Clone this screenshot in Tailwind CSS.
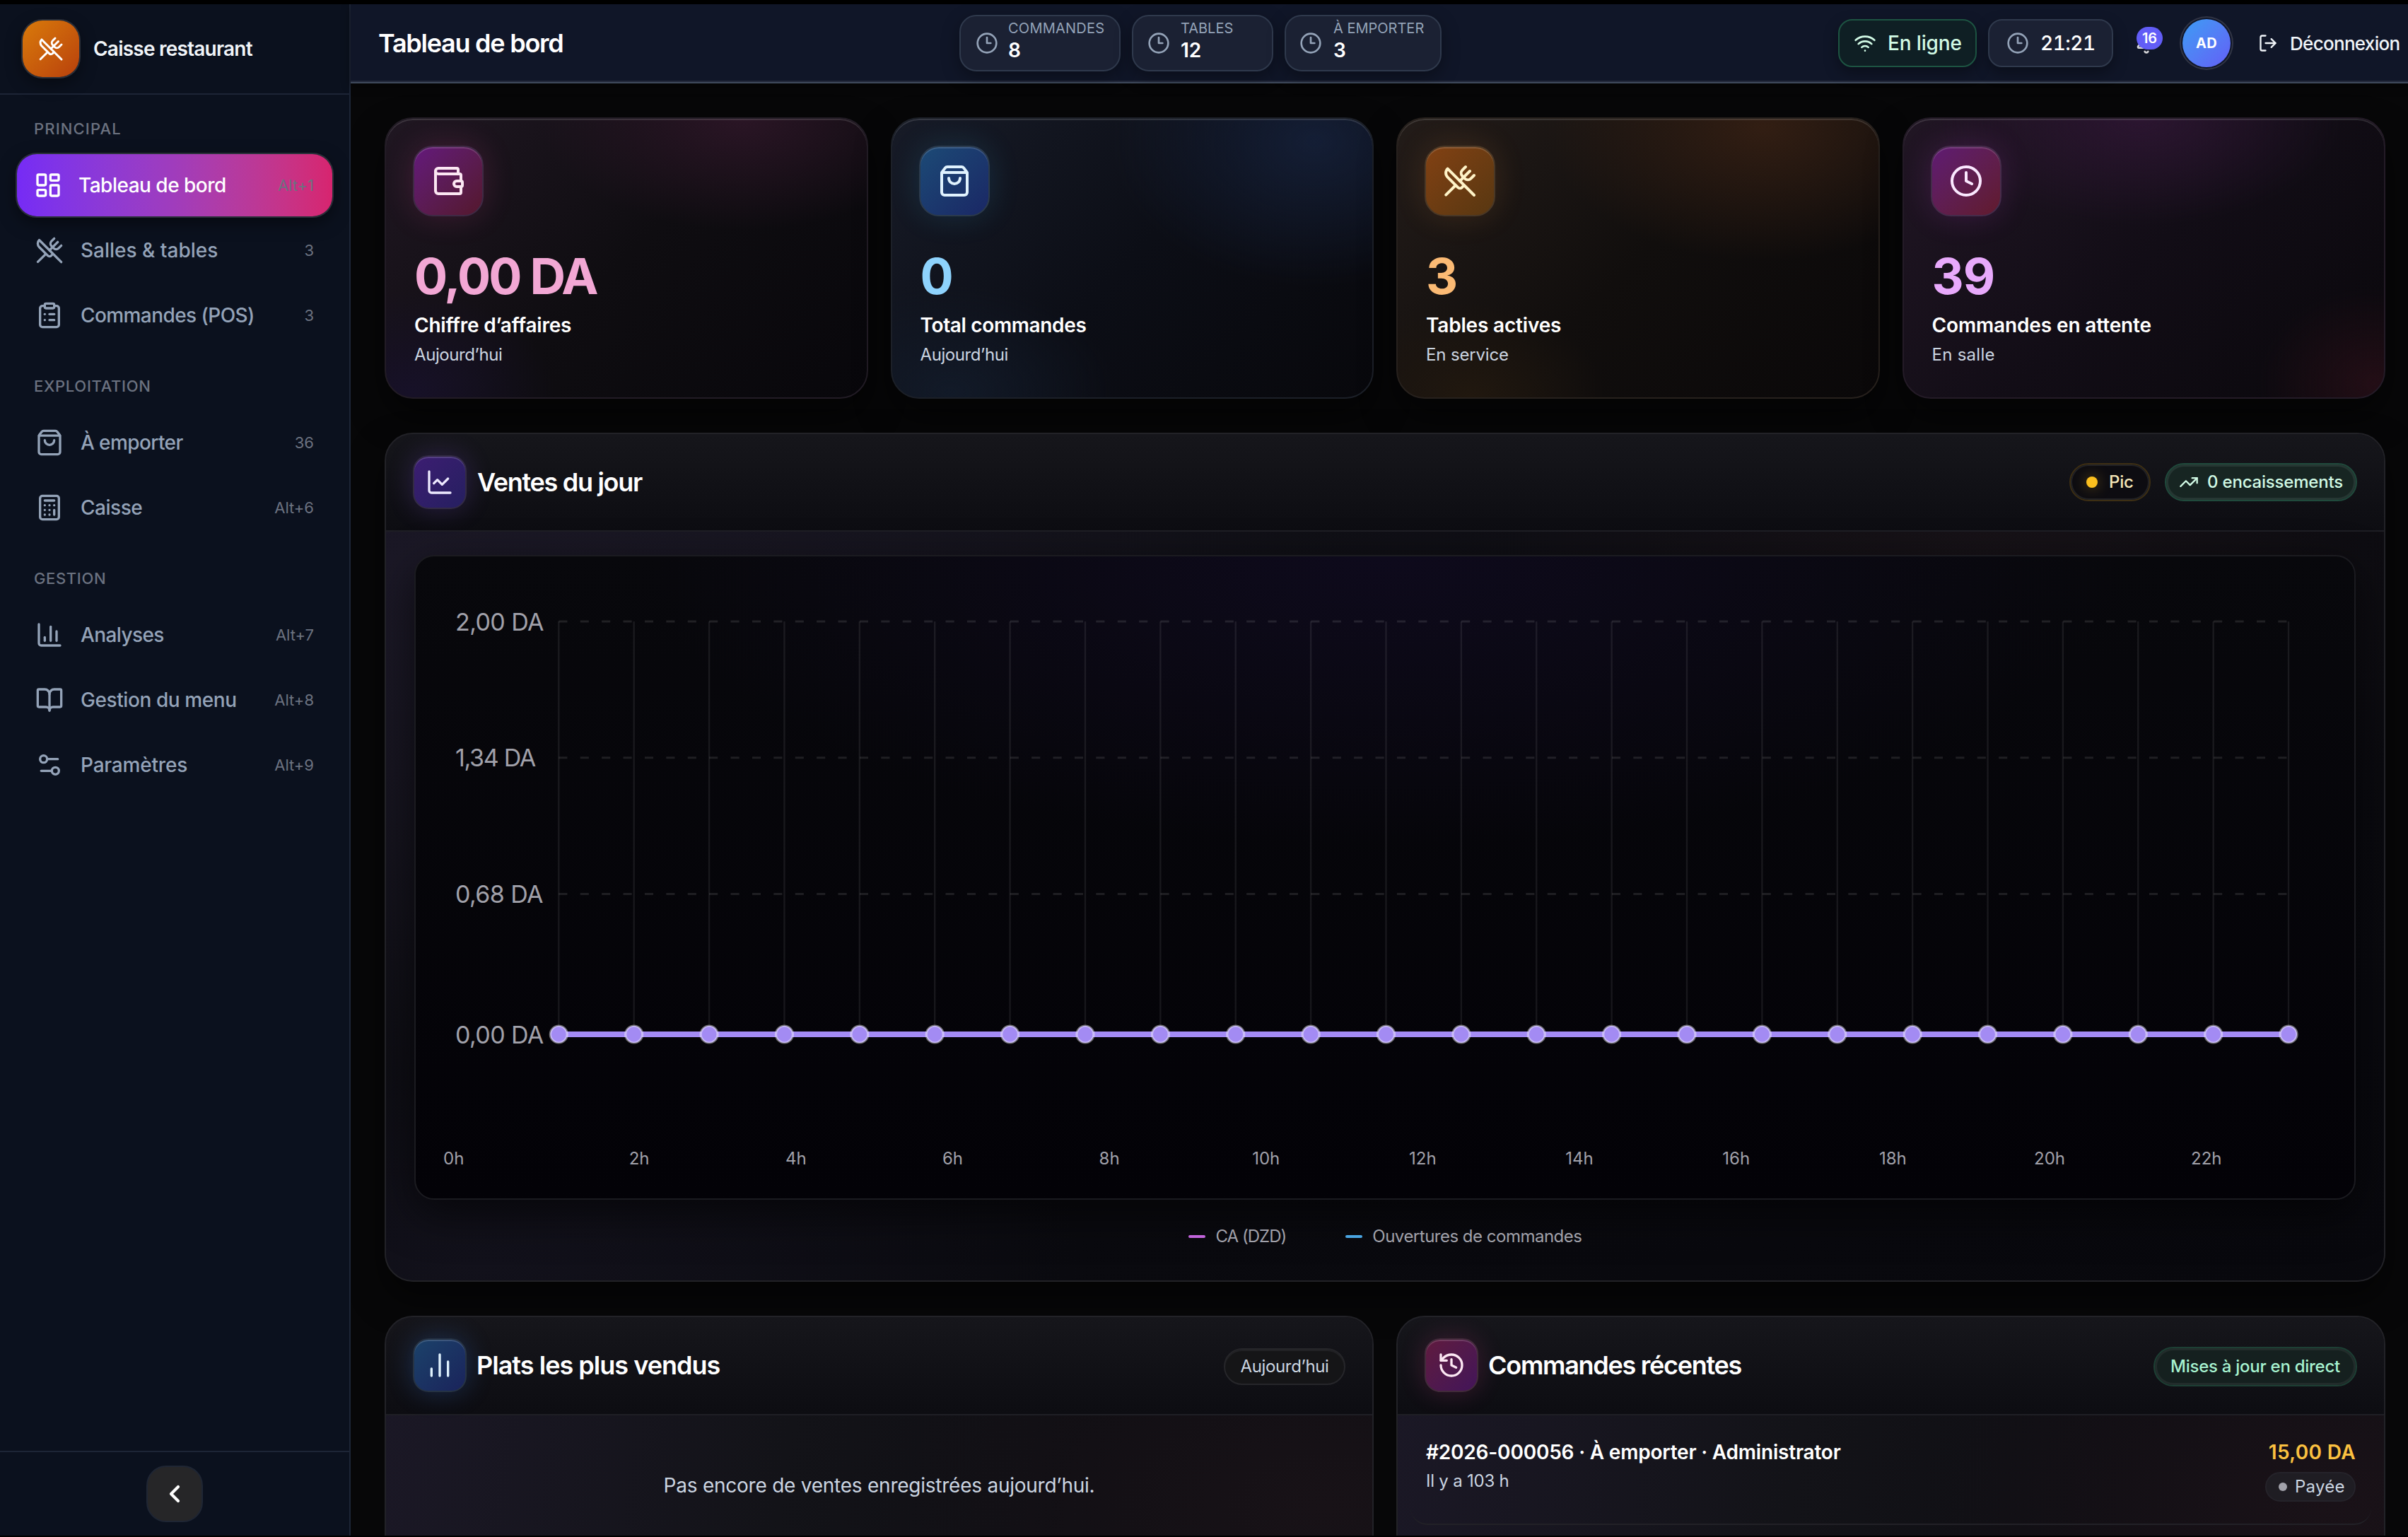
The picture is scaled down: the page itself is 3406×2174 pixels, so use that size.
<!DOCTYPE html>
<html lang="fr">
<head>
<meta charset="utf-8">
<title>Caisse restaurant</title>
<script src="https://cdn.jsdelivr.net/npm/@tailwindcss/browser@4"></script>
</head>
<body class="bg-black font-[Inter,sans-serif] text-white">

<svg class="hidden">
  <symbol id="i-utensils" viewBox="0 0 24 24"><path d="m16 2-2.3 2.3a3 3 0 0 0 0 4.2l1.8 1.8a3 3 0 0 0 4.2 0L22 8"/><path d="M15 15 3.3 3.3a4.2 4.2 0 0 0 0 6l7.3 7.3c.7.7 2 .7 2.8 0L15 15Zm0 0 7 7"/><path d="m2.1 21.8 6.4-6.3"/><path d="m19 5-7 7"/></symbol>
  <symbol id="i-dashboard" viewBox="0 0 24 24"><rect width="7" height="9" x="3" y="3" rx="1"/><rect width="7" height="5" x="14" y="3" rx="1"/><rect width="7" height="9" x="14" y="12" rx="1"/><rect width="7" height="5" x="3" y="16" rx="1"/></symbol>
  <symbol id="i-clipboard" viewBox="0 0 24 24"><rect width="8" height="4" x="8" y="2" rx="1"/><path d="M16 4h2a2 2 0 0 1 2 2v14a2 2 0 0 1-2 2H6a2 2 0 0 1-2-2V6a2 2 0 0 1 2-2h2"/><path d="M12 11h4"/><path d="M12 16h4"/><path d="M8 11h.01"/><path d="M8 16h.01"/></symbol>
  <symbol id="i-bag" viewBox="0 0 24 24"><path d="M16 10a4 4 0 0 1-8 0"/><path d="M3.103 6.034h17.794"/><path d="M3.4 5.467a2 2 0 0 0-.4 1.2V20a2 2 0 0 0 2 2h14a2 2 0 0 0 2-2V6.667a2 2 0 0 0-.4-1.2l-2-2.667A2 2 0 0 0 17 2H7a2 2 0 0 0-1.6.8z"/></symbol>
  <symbol id="i-calculator" viewBox="0 0 24 24"><rect width="16" height="20" x="4" y="2" rx="2"/><path d="M8 6h8M16 14v4M16 10h.01M12 10h.01M8 10h.01M12 14h.01M8 14h.01M12 18h.01M8 18h.01"/></symbol>
  <symbol id="i-column" viewBox="0 0 24 24"><path d="M3 3v16a2 2 0 0 0 2 2h16"/><path d="M18 17V9"/><path d="M13 17V5"/><path d="M8 17v-3"/></symbol>
  <symbol id="i-book" viewBox="0 0 24 24"><path d="M12 7v14"/><path d="M3 18a1 1 0 0 1-1-1V4a1 1 0 0 1 1-1h5a4 4 0 0 1 4 4 4 4 0 0 1 4-4h5a1 1 0 0 1 1 1v13a1 1 0 0 1-1 1h-6a3 3 0 0 0-3 3 3 3 0 0 0-3-3z"/></symbol>
  <symbol id="i-settings" viewBox="0 0 24 24"><path d="M14 17H5"/><path d="M19 7h-9"/><circle cx="17" cy="17" r="3"/><circle cx="7" cy="7" r="3"/></symbol>
  <symbol id="i-line" viewBox="0 0 24 24"><path d="M3 3v16a2 2 0 0 0 2 2h16"/><path d="m19 9-5 5-4-4-3 3"/></symbol>
  <symbol id="i-wallet" viewBox="0 0 24 24"><path d="M19 7V4a1 1 0 0 0-1-1H5a2 2 0 0 0 0 4h15a1 1 0 0 1 1 1v4h-3a2 2 0 0 0 0 4h3a1 1 0 0 0 1-1v-2a1 1 0 0 0-1-1"/><path d="M3 5v14a2 2 0 0 0 2 2h15a1 1 0 0 0 1-1v-4"/></symbol>
  <symbol id="i-clock" viewBox="0 0 24 24"><circle cx="12" cy="12" r="10"/><path d="M12 6v6l4 2"/></symbol>
  <symbol id="i-clock3" viewBox="0 0 24 24"><circle cx="12" cy="12" r="10"/><path d="M12 6v6h4"/></symbol>
  <symbol id="i-wifi" viewBox="0 0 24 24"><path d="M12 20h.01"/><path d="M2 8.82a15 15 0 0 1 20 0"/><path d="M5 12.859a10 10 0 0 1 14 0"/><path d="M8.5 16.429a5 5 0 0 1 7 0"/></symbol>
  <symbol id="i-bell" viewBox="0 0 24 24"><path d="M10.268 21a2 2 0 0 0 3.464 0"/><path d="M3.262 15.326A1 1 0 0 0 4 17h16a1 1 0 0 0 .74-1.673C19.41 13.956 18 12.499 18 8A6 6 0 0 0 6 8c0 4.499-1.411 5.956-2.738 7.326"/></symbol>
  <symbol id="i-logout" viewBox="0 0 24 24"><path d="m16 17 5-5-5-5"/><path d="M21 12H9"/><path d="M9 21H5a2 2 0 0 1-2-2V5a2 2 0 0 1 2-2h4"/></symbol>
  <symbol id="i-trend" viewBox="0 0 24 24"><path d="M16 7h6v6"/><path d="m22 7-8.5 8.5-5-5L2 17"/></symbol>
  <symbol id="i-history" viewBox="0 0 24 24"><path d="M3 12a9 9 0 1 0 9-9 9.75 9.75 0 0 0-6.74 2.74L3 8"/><path d="M3 3v5h5"/><path d="M12 7v5l4 2"/></symbol>
  <symbol id="i-bars" viewBox="0 0 24 24"><path d="M5 21v-6"/><path d="M12 21V3"/><path d="M19 21V9"/></symbol>
  <symbol id="i-left" viewBox="0 0 24 24"><path d="m15 18-6-6 6-6"/></symbol>
</svg>

<div class="flex h-[2174px] w-[3406px] overflow-hidden pt-[6px] pb-[2px] whitespace-nowrap [&_svg]:fill-none [&_svg]:stroke-current [&_svg]:stroke-2 [&_svg]:shrink-0 [&_svg]:[stroke-linecap:round] [&_svg]:[stroke-linejoin:round]">

  <!-- Sidebar -->
  <aside class="flex w-[496px] shrink-0 flex-col border-r-2 border-[#1d2536] bg-[#0b111e]">
    <div class="flex h-[128px] items-center gap-[20px] border-b-2 border-[#1d2536] pl-[32px]">
      <div class="flex size-[80px] items-center justify-center rounded-[28px] bg-linear-135 from-[#d97a0a] to-[#b8400c] shadow-[0_0_0_2px_#2b303a,0_8px_24px_rgba(0,0,0,0.45)]">
        <svg class="size-[36px]"><use href="#i-utensils"/></svg>
      </div>
      <span class="text-[28px] font-semibold tracking-[-0.78px] text-[#f1f5f9]">Caisse restaurant</span>
    </div>

    <nav class="flex flex-1 flex-col gap-[40px] px-[24px] pt-[32px] text-[28px] font-medium text-[#94a3b8]">
      <div class="flex flex-col gap-[4px]">
        <h2 class="mb-[16px] h-[32px] pl-[24px] text-[22px] leading-[32px] tracking-[1.14px] text-[#6b7280]">PRINCIPAL</h2>
        <a class="flex h-[88px] items-center gap-[23px] rounded-[28px] bg-linear-to-r from-[#762bf5] via-[#a03cbc] to-[#d7246f] pr-[26px] pl-[24px] text-white shadow-[0_0_0_2px_#2b303a,0_8px_24px_rgba(0,0,0,0.5)]">
          <svg class="size-[40px]"><use href="#i-dashboard"/></svg><span class="tracking-[-0.51px]">Tableau de bord</span><span class="ml-auto text-[22px] font-normal text-[#6b7280]">Alt+1</span>
        </a>
        <a class="flex h-[88px] items-center gap-[24px] pr-[26px] pl-[26px]"><svg class="size-[40px]"><use href="#i-utensils"/></svg><span>Salles &amp; tables</span><span class="ml-auto text-[22px] font-normal text-[#6b7280]">3</span></a>
        <a class="flex h-[88px] items-center gap-[24px] pr-[26px] pl-[26px]"><svg class="size-[40px]"><use href="#i-clipboard"/></svg><span class="tracking-[-0.58px]">Commandes (POS)</span><span class="ml-auto text-[22px] font-normal text-[#6b7280]">3</span></a>
      </div>
      <div class="flex flex-col gap-[4px]">
        <h2 class="mb-[16px] h-[32px] pl-[24px] text-[22px] leading-[32px] tracking-[0.68px] text-[#6b7280]">EXPLOITATION</h2>
        <a class="flex h-[88px] items-center gap-[24px] pr-[26px] pl-[26px]"><svg class="size-[40px]"><use href="#i-bag"/></svg><span class="tracking-[-0.6px]">À emporter</span><span class="ml-auto text-[22px] font-normal text-[#6b7280]">36</span></a>
        <a class="flex h-[88px] items-center gap-[24px] pr-[26px] pl-[26px]"><svg class="size-[40px]"><use href="#i-calculator"/></svg><span class="tracking-[-0.47px]">Caisse</span><span class="ml-auto text-[22px] font-normal text-[#6b7280]">Alt+6</span></a>
      </div>
      <div class="flex flex-col gap-[4px]">
        <h2 class="mb-[16px] h-[32px] pl-[24px] text-[22px] leading-[32px] tracking-[0.64px] text-[#6b7280]">GESTION</h2>
        <a class="flex h-[88px] items-center gap-[24px] pr-[26px] pl-[26px]"><svg class="size-[40px]"><use href="#i-column"/></svg><span class="tracking-[-0.6px]">Analyses</span><span class="ml-auto text-[22px] font-normal text-[#6b7280]">Alt+7</span></a>
        <a class="flex h-[88px] items-center gap-[24px] pr-[26px] pl-[26px]"><svg class="size-[40px]"><use href="#i-book"/></svg><span class="tracking-[-0.42px]">Gestion du menu</span><span class="ml-auto text-[22px] font-normal text-[#6b7280]">Alt+8</span></a>
        <a class="flex h-[88px] items-center gap-[24px] pr-[26px] pl-[26px]"><svg class="size-[40px]"><use href="#i-settings"/></svg><span class="tracking-[-0.2px]">Paramètres</span><span class="ml-auto text-[22px] font-normal text-[#6b7280]">Alt+9</span></a>
      </div>
    </nav>

    <div class="flex h-[120px] items-center justify-center border-t-2 border-[#1d2536]">
      <button class="flex size-[80px] items-center justify-center rounded-[28px] border-2 border-[#1f2634] bg-[#262628] text-white"><svg class="size-[40px] stroke-[2.5]!"><use href="#i-left"/></svg></button>
    </div>
  </aside>

  <div class="flex min-w-0 flex-1 flex-col">
    <!-- Top bar -->
    <header class="relative z-10 flex h-[112px] shrink-0 items-center border-b-2 border-[#3f4a5c] bg-[#101628] pl-[39px] shadow-[inset_0_-2px_0_#22283a,0_4px_12px_rgba(0,0,0,0.4)]">
      <h1 class="w-[822px] text-[36px] leading-[44px] font-semibold tracking-[-1.25px]">Tableau de bord</h1>
      <div class="flex gap-[16px]">
        <div class="flex h-[80px] w-[228px] items-center gap-[13px] rounded-[24px] border-2 border-[#2f394c] bg-[#1b2133] pl-[21px] shadow-[0_8px_24px_rgba(0,0,0,0.35)]">
          <svg class="size-[32px] text-[#94a3b8]"><use href="#i-clock3"/></svg>
          <div class="self-start pt-[5px] pl-px"><div class="text-[20px] leading-[24px] tracking-[0.24px] text-[#94a3b8]">COMMANDES</div><div class="mt-px text-[28px] leading-[36px] font-semibold">8</div></div>
        </div>
        <div class="flex h-[80px] w-[200px] items-center gap-[15px] rounded-[24px] border-2 border-[#2f394c] bg-[#1b2133] pl-[20px] shadow-[0_8px_24px_rgba(0,0,0,0.35)]">
          <svg class="size-[32px] text-[#94a3b8]"><use href="#i-clock3"/></svg>
          <div class="self-start pt-[5px]"><div class="text-[20px] leading-[24px] text-[#94a3b8]">TABLES</div><div class="mt-px text-[28px] leading-[36px] font-semibold">12</div></div>
        </div>
        <div class="flex h-[80px] w-[222px] items-center gap-[16px] rounded-[24px] border-2 border-[#2f394c] bg-[#1b2133] pl-[19px] shadow-[0_8px_24px_rgba(0,0,0,0.35)]">
          <svg class="size-[32px] text-[#94a3b8]"><use href="#i-clock3"/></svg>
          <div class="self-start pt-[5px]"><div class="text-[20px] leading-[24px] text-[#94a3b8]">À EMPORTER</div><div class="mt-px text-[28px] leading-[36px] font-semibold">3</div></div>
        </div>
      </div>
      <div class="ml-[561px] flex items-center">
        <div class="flex h-[68px] w-[196px] items-center gap-[16px] rounded-[20px] border-2 border-[#1d5442] bg-[#0f1f24] pl-[20px] text-[28px] font-medium tracking-[-0.14px] text-[#d1fae5] shadow-[0_8px_20px_rgba(0,0,0,0.35)]"><svg class="size-[32px]"><use href="#i-wifi"/></svg>En ligne</div>
        <div class="ml-[16px] flex h-[68px] w-[177px] items-center gap-[16px] rounded-[20px] border-2 border-[#2f394c] bg-[#1b2133] pl-[24px] text-[28px] font-medium tracking-[-0.5px] tabular-nums shadow-[0_8px_20px_rgba(0,0,0,0.35)]"><svg class="size-[32px] text-[#94a3b8]"><use href="#i-clock3"/></svg>21:21</div>
        <div class="relative ml-[31px] size-[32px] text-[#d4d4d8]">
          <svg class="size-[32px]"><use href="#i-bell"/></svg>
          <span class="absolute top-[-7px] left-[2px] flex h-[32px] w-[37px] items-center justify-center rounded-full bg-[#625df7] text-[20px] leading-none font-semibold text-white">16</span>
        </div>
        <div class="ml-[35px] flex size-[68px] items-center justify-center rounded-full bg-linear-135 from-[#389cf4] to-[#615df6] text-[20px] font-bold tracking-[0.4px] shadow-[0_0_0_2px_#101628,0_0_0_4px_#313545]">AD</div>
        <div class="ml-[39px] flex items-center gap-[17px] text-[26px] font-medium tracking-[-0.7px] text-[#f1f5f9]"><svg class="size-[28px]"><use href="#i-logout"/></svg>Déconnexion</div>
      </div>
    </header>

    <!-- Dashboard -->
    <main class="flex flex-1 flex-col gap-[48px] overflow-hidden bg-[#070708] pt-[48px] pr-[32px] pl-[48px]">

      <section class="grid shrink-0 grid-cols-4 gap-[32px]">
        <div class="h-[398px] rounded-[40px] border-2 border-[#221c25] bg-[radial-gradient(ellipse_42%_40%_at_74%_0%,#2a1525,transparent),radial-gradient(ellipse_30%_36%_at_5%_98%,#171128,transparent),linear-gradient(135deg,#201722,#0f0d11_50%,#08070b)] p-[38px] shadow-[0_24px_48px_rgba(0,0,0,0.5),inset_0_2px_0_rgba(255,255,255,0.13)]">
          <div class="flex size-[100px] items-center justify-center rounded-[28px] border-2 border-[#3f2a45] bg-linear-135 from-[#64187c] to-[#54172c] text-[#fce7f3] shadow-[0_0_44px_rgba(236,72,153,0.18),inset_0_2px_0_rgba(255,255,255,0.15)]"><svg class="size-[48px]"><use href="#i-wallet"/></svg></div>
          <div class="mt-[49px] pl-[2px] text-[70px] leading-[72px] font-bold tracking-[-2.8px] text-[#f2a7d4]">0,00 DA</div>
          <div class="mt-[13px] pl-[2px] text-[28px] leading-[40px] font-semibold tracking-[-0.21px]">Chiffre d’affaires</div>
          <div class="mt-[6px] pl-[2px] text-[24px] leading-[32px] tracking-[-0.41px] text-[#cbd5e1]">Aujourd’hui</div>
        </div>
        <div class="h-[398px] rounded-[40px] border-2 border-[#1c2028] bg-[radial-gradient(ellipse_42%_52%_at_88%_8%,#141e35,transparent),radial-gradient(ellipse_34%_38%_at_12%_98%,#121a28,transparent),linear-gradient(135deg,#171b27,#0c0e16_50%,#08080c)] p-[38px] shadow-[0_24px_48px_rgba(0,0,0,0.5),inset_0_2px_0_rgba(255,255,255,0.13)]">
          <div class="flex size-[100px] items-center justify-center rounded-[28px] border-2 border-[#2b3a4c] bg-linear-135 from-[#1c4a76] to-[#1a2765] text-[#e0f2fe] shadow-[0_0_44px_rgba(56,189,248,0.15),inset_0_2px_0_rgba(255,255,255,0.15)]"><svg class="size-[48px]"><use href="#i-bag"/></svg></div>
          <div class="mt-[49px] pl-[2px] text-[70px] leading-[72px] font-bold tracking-[-2.9px] text-[#8ed3fd]">0</div>
          <div class="mt-[13px] pl-[2px] text-[28px] leading-[40px] font-semibold tracking-[-0.35px]">Total commandes</div>
          <div class="mt-[6px] pl-[2px] text-[24px] leading-[32px] tracking-[-0.41px] text-[#cbd5e1]">Aujourd’hui</div>
        </div>
        <div class="h-[398px] rounded-[40px] border-2 border-[#27211d] bg-[radial-gradient(ellipse_45%_48%_at_76%_3%,#321e13,transparent),radial-gradient(ellipse_28%_34%_at_15%_100%,#21180f,transparent),linear-gradient(135deg,#231c19,#110e0d_50%,#0a0809)] p-[38px] shadow-[0_24px_48px_rgba(0,0,0,0.5),inset_0_2px_0_rgba(255,255,255,0.13)]">
          <div class="flex size-[100px] items-center justify-center rounded-[28px] border-2 border-[#4a3826] bg-linear-135 from-[#824113] to-[#583711] text-[#fef3c7] shadow-[0_0_44px_rgba(251,146,60,0.15),inset_0_2px_0_rgba(255,255,255,0.15)]"><svg class="size-[48px]"><use href="#i-utensils"/></svg></div>
          <div class="mt-[49px] pl-[2px] text-[70px] leading-[72px] font-bold tracking-[-2px] text-[#fbba74]">3</div>
          <div class="mt-[13px] pl-[2px] text-[28px] leading-[40px] font-semibold tracking-[-0.18px]">Tables actives</div>
          <div class="mt-[6px] pl-[2px] text-[24px] leading-[32px] tracking-[-0.16px] text-[#cbd5e1]">En service</div>
        </div>
        <div class="h-[398px] rounded-[40px] border-2 border-[#241b27] bg-[radial-gradient(ellipse_42%_38%_at_49%_0%,#2b1530,transparent),radial-gradient(ellipse_24%_34%_at_98%_95%,#230e16,transparent),linear-gradient(135deg,#211624,#120d16_50%,#0a080c)] p-[38px] shadow-[0_24px_48px_rgba(0,0,0,0.5),inset_0_2px_0_rgba(255,255,255,0.13)]">
          <div class="flex size-[100px] items-center justify-center rounded-[28px] border-2 border-[#452c4b] bg-linear-135 from-[#5f1a73] to-[#611a2c] text-[#fae8ff] shadow-[0_0_44px_rgba(217,70,239,0.17),inset_0_2px_0_rgba(255,255,255,0.15)]"><svg class="size-[48px]"><use href="#i-clock"/></svg></div>
          <div class="mt-[49px] pl-[2px] text-[70px] leading-[72px] font-bold tracking-[-1px] text-[#e8a9fb]">39</div>
          <div class="mt-[13px] pl-[2px] text-[28px] leading-[40px] font-semibold tracking-[-0.13px]">Commandes en attente</div>
          <div class="mt-[6px] pl-[2px] text-[24px] leading-[32px] tracking-[0.27px] text-[#cbd5e1]">En salle</div>
        </div>
      </section>

      <section class="h-[1201px] shrink-0 overflow-hidden rounded-[40px] border-2 border-[#222227] bg-[radial-gradient(ellipse_26%_50%_at_80%_8%,#171217,transparent),radial-gradient(ellipse_45%_60%_at_0%_15%,#1b1826,transparent),radial-gradient(ellipse_30%_30%_at_5%_98%,#12111b,transparent),linear-gradient(160deg,#16151d,#0b0b10_50%,#08080d)] shadow-[0_24px_48px_rgba(0,0,0,0.5)]">
        <div class="flex h-[138px] items-center border-b-2 border-[#1f1f25] bg-linear-to-b from-[#16161b] to-[#0d0d12] px-[38px]">
          <div class="flex size-[76px] items-center justify-center rounded-[22px] border-2 border-[#332b45] bg-linear-135 from-[#3c1d72] to-[#251f60] text-[#ede9fe] shadow-[0_0_36px_rgba(139,92,246,0.22),inset_0_2px_0_rgba(255,255,255,0.15)]"><svg class="size-[40px]"><use href="#i-line"/></svg></div>
          <h2 class="ml-[15px] text-[36px] font-semibold tracking-[-1.3px]">Ventes du jour</h2>
          <div class="ml-auto flex items-center gap-[20px] text-[24px] font-medium">
            <span class="flex h-[54px] w-[115px] items-center gap-[16px] rounded-full border-2 border-[#3d2f14] bg-[#0d0c11] pl-[22px] tracking-[-0.22px] text-[#f5e6b8] shadow-[inset_0_0_0_2px_#222226]"><i class="size-[16px] rounded-full bg-[#fbbf1e] shadow-[0_0_20px_rgba(251,191,36,0.4)]"></i>Pic</span>
            <span class="flex h-[54px] w-[272px] items-center gap-[12px] rounded-full border-2 border-[#204a3c] bg-[#172522] pl-[18px] tracking-[-0.2px] text-[#d1fae5] shadow-[inset_0_0_0_3px_#263733]"><svg class="size-[28px]"><use href="#i-trend"/></svg>0 encaissements</span>
          </div>
        </div>
        <div class="px-[40px] pt-[33px]">
          <div class="h-[912px] rounded-[28px] border-2 border-[#1b1b20] bg-[radial-gradient(ellipse_38%_45%_at_50%_0%,#0e0a1c,transparent),linear-gradient(180deg,#08080c,#030207)] shadow-[0_20px_60px_rgba(0,0,0,0.55)]">
            <svg id="chart" class="block" width="2742" height="819" viewBox="0 1 2742 819"></svg>
            <div class="mt-[17px] ml-[39px] grid w-[2660px] grid-cols-24 text-center text-[24px] leading-[32px] text-[#a1a1aa]">
              <span class="text-left">0h</span><span></span><span>2h</span><span></span><span>4h</span><span></span><span>6h</span><span></span><span>8h</span><span></span><span>10h</span><span></span><span>12h</span><span></span><span>14h</span><span></span><span>16h</span><span></span><span>18h</span><span></span><span>20h</span><span></span><span>22h</span><span></span>
            </div>
          </div>
          <div class="mt-[36px] flex h-[32px] items-center justify-center text-[24px] text-[#a1a1aa]">
            <i class="h-[4px] w-[24px] rounded-full bg-[#c264dc]"></i><span class="ml-[15px] tracking-[-0.98px]">CA (DZD)</span>
            <i class="ml-[84px] h-[4px] w-[24px] rounded-full bg-[#4aa5e2]"></i><span class="ml-[14px] tracking-[-0.5px]">Ouvertures de commandes</span>
          </div>
        </div>
      </section>

      <section class="grid shrink-0 grid-cols-2 gap-[32px]">
        <div class="h-[600px] overflow-hidden rounded-[40px] border-2 border-[#222227] bg-[radial-gradient(ellipse_45%_60%_at_95%_45%,#181217,transparent),linear-gradient(100deg,#1b1826,#131318_40%,#0f0e13_70%)]">
          <div class="flex h-[139px] items-center border-b-2 border-[#1f1f25] bg-linear-to-b from-[#16161b] to-[#0d0d12] px-[38px] pb-px">
            <div class="flex size-[76px] items-center justify-center rounded-[22px] border-2 border-[#263344] bg-linear-135 from-[#1b426a] to-[#1a235b] text-[#e0f2fe] shadow-[0_0_36px_rgba(59,130,246,0.25),inset_0_2px_0_rgba(255,255,255,0.15)]"><svg class="size-[40px]"><use href="#i-bars"/></svg></div>
            <h2 class="ml-[14px] text-[36px] font-semibold tracking-[-0.98px]">Plats les plus vendus</h2>
            <span class="mt-[4px] ml-auto flex h-[52px] w-[172px] items-center justify-center rounded-full border-2 border-[#26262a] bg-[#151517] text-[24px] tracking-[-0.35px] text-[#cbd5e1] shadow-[inset_0_2px_0_#222225]">Aujourd’hui</span>
          </div>
          <p class="mt-[79px] text-center text-[28px] leading-[40px] tracking-[-0.24px] text-[#cbd5e1]">Pas encore de ventes enregistrées aujourd’hui.</p>
        </div>

        <div class="h-[600px] overflow-hidden rounded-[40px] border-2 border-[#222227] bg-[radial-gradient(ellipse_40%_60%_at_95%_45%,#1a1218,transparent),linear-gradient(100deg,#1b1826,#131318_40%,#0f0e13_70%)]">
          <div class="flex h-[139px] items-center border-b-2 border-[#1f1f25] bg-linear-to-b from-[#16161b] to-[#0d0d12] px-[38px] pb-px">
            <div class="flex size-[76px] items-center justify-center rounded-[22px] border-2 border-[#432b3b] bg-linear-135 from-[#601a3e] to-[#431459] text-[#fce7f3] shadow-[0_0_36px_rgba(236,72,153,0.2),inset_0_2px_0_rgba(255,255,255,0.15)]"><svg class="size-[40px]"><use href="#i-history"/></svg></div>
            <h2 class="ml-[14px] text-[36px] font-semibold tracking-[-1.28px]">Commandes récentes</h2>
            <span class="mt-[4px] ml-auto flex h-[56px] w-[288px] items-center justify-center rounded-full border-2 border-[#1d3f34] bg-[#15201f] text-[24px] font-medium tracking-[-0.27px] text-[#a7f3d0] shadow-[inset_0_0_0_3px_#222c2b]">Mises à jour en direct</span>
          </div>
          <div class="px-[18px]">
            <div class="flex h-[155px] justify-between rounded-[24px] border-b-2 border-[#222127] px-[22px] pt-[32px]">
              <div>
                <div class="text-[28px] leading-[40px] font-semibold tracking-[-0.2px]">#2026-000056 · À emporter · Administrator</div>
                <div class="mt-[5px] text-[24px] leading-[32px] tracking-[-0.22px] text-[#cbd5e1]">Il y a 103 h</div>
              </div>
              <div class="flex flex-col items-end">
                <div class="text-[28px] leading-[40px] font-semibold tracking-[0.35px] text-[#fbc140]">15,00 DA</div>
                <div class="mt-[8px] flex h-[42px] w-[128px] items-center gap-[11px] rounded-full border-2 border-[#25232a] bg-[#1f1d23] pl-[17px] text-[24px] tracking-[0.26px] text-[#cbd5e1]"><i class="size-[12px] rounded-full bg-[#a1a1aa]"></i>Payée</div>
              </div>
            </div>
          </div>
        </div>
      </section>
    </main>
  </div>
</div>

<script>
  // Hourly sales chart: 24 columns, three dashed guides, flat revenue series
  const x0 = 202.3, step = 106.38, y0 = 93, y1 = 677;
  const xs = Array.from({ length: 24 }, (_, i) => x0 + i * step);
  const x1 = xs[23];
  const labels = [['2,00 DA', 106], ['1,34 DA', 298], ['0,68 DA', 491], ['0,00 DA', 690]];
  document.getElementById('chart').innerHTML =
    [y0, 285.7, 478.4].map(y => `<path d="M${x0} ${y}H${x1}" stroke="#fff" stroke-opacity=".1" stroke-dasharray="12.16 18.24" style="stroke-width:3.04;stroke-linecap:butt"/>`).join('') +
    xs.map(x => `<path d="M${x} ${y0}V${y1}" stroke="#fff" stroke-opacity=".08" style="stroke-width:2.4;stroke-linecap:butt"/>`).join('') +
    `<path d="M${x0} ${y1}H${x1}" stroke="#a38bf5" style="stroke-width:8"/>` +
    xs.map(x => `<circle cx="${x}" cy="${y1}" r="12" fill="#a38bf3" stroke="#fff" stroke-opacity=".42" style="stroke-width:3.2"/>`).join('') +
    labels.map(([t, y], i) => `<text x="56" y="${y}" fill="#a1a1aa" stroke="none" font-size="34" letter-spacing="${i === 1 ? -1.3 : -0.6}">${t}</text>`).join('');
</script>
</body>
</html>
